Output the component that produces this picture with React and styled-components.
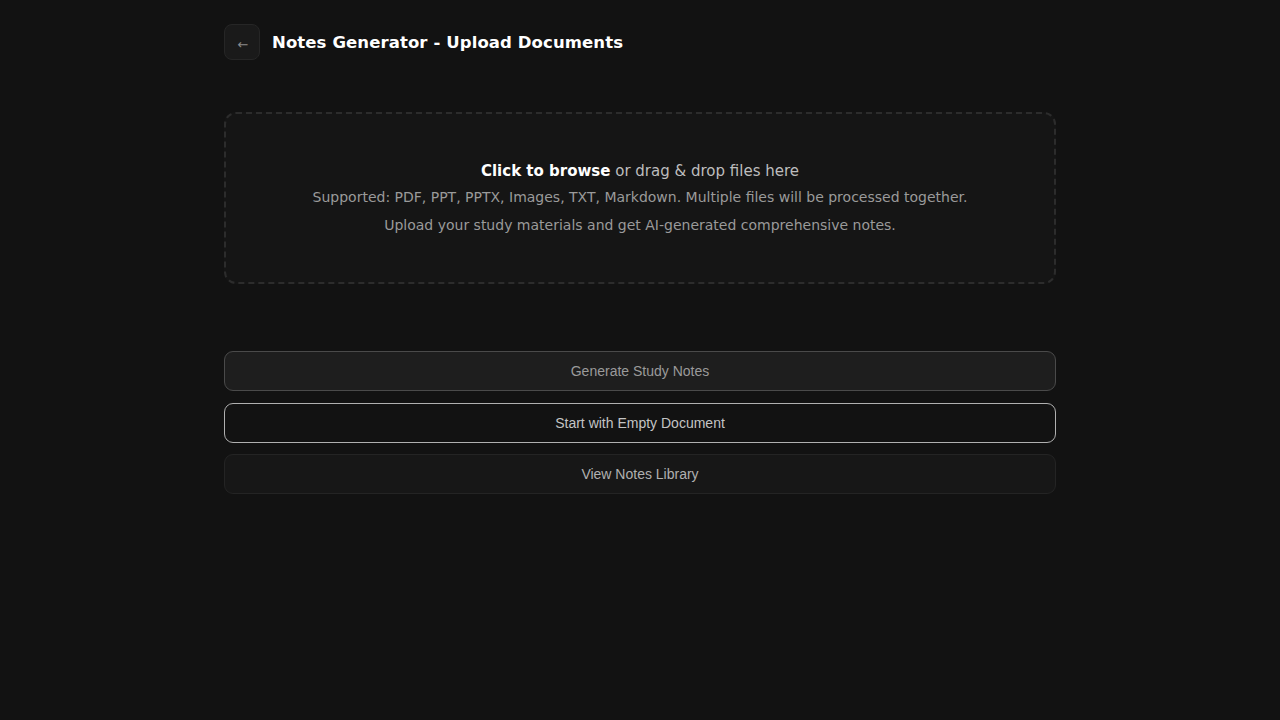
import styled, { createGlobalStyle } from "styled-components";

const GlobalStyle = createGlobalStyle`
  html, body {
    margin: 0;
    padding: 0;
    background: #121212;
  }
  body {
    font-family: "DejaVu Sans", sans-serif;
    color: #fff;
  }
`;

const Page = styled.main`
  width: 832px;
  margin: 0 auto;
  padding-top: 24px;
`;

const Header = styled.header`
  display: flex;
  align-items: center;
  gap: 12px;
  height: 36px;
`;

const BackButton = styled.button`
  width: 36px;
  height: 36px;
  display: flex;
  align-items: center;
  justify-content: center;
  padding: 5px 0 0 2px;
  background: #1a1a1a;
  border: 1px solid #262626;
  border-radius: 8px;
  color: #8a8a8a;
  font-family: "DejaVu Sans", sans-serif;
  font-size: 13px;
  cursor: pointer;
`;

const Title = styled.h1`
  margin: 0;
  padding-top: 1px;
  font-size: 16.5px;
  font-weight: 700;
  color: #fff;
  letter-spacing: 0.1px;
`;

const DropZone = styled.div`
  margin-top: 52px;
  height: 172px;
  box-sizing: border-box;
  border: 2px dashed #2c2c2c;
  border-radius: 12px;
  background: #151515;
  display: flex;
  flex-direction: column;
  align-items: center;
  justify-content: center;
  text-align: center;
  cursor: pointer;
`;

const DropTitle = styled.p`
  margin: 0 0 1px;
  padding-top: 3px;
  font-size: 15px;
  color: #bdbdbd;
  line-height: 22px;
  strong {
    color: #fff;
    font-weight: 700;
  }
`;

const DropHint = styled.p`
  margin: 0;
  font-size: 14px;
  line-height: 28px;
  color: #9a9a9a;
`;

const Actions = styled.div`
  margin-top: 67px;
  display: flex;
  flex-direction: column;
  gap: 11.5px;
`;

const variants = {
  disabled: { bg: "#1e1e1e", border: "#4a4a4a", color: "#9a9a9a" },
  outline: { bg: "#121212", border: "#b0b0b0", color: "#c4c4c4" },
  ghost: { bg: "#171717", border: "#242424", color: "#b0b0b0" },
};

const ActionButton = styled.button`
  height: 40px;
  width: 100%;
  border-radius: 9px;
  background: ${(p) => variants[p.$variant].bg};
  border: 1px solid ${(p) => variants[p.$variant].border};
  color: ${(p) => variants[p.$variant].color};
  font-family: "Liberation Sans", Arial, sans-serif;
  font-size: 14px;
  cursor: ${(p) => (p.$variant === "disabled" ? "not-allowed" : "pointer")};
`;

export default function App() {
  return (
    <>
      <GlobalStyle />
      <Page>
        <Header>
          <BackButton aria-label="Back">←</BackButton>
          <Title>Notes Generator - Upload Documents</Title>
        </Header>

        <DropZone>
          <DropTitle>
            <strong>Click to browse</strong> or drag &amp; drop files here
          </DropTitle>
          <DropHint>
            Supported: PDF, PPT, PPTX, Images, TXT, Markdown. Multiple files will be processed together.
          </DropHint>
          <DropHint>Upload your study materials and get AI-generated comprehensive notes.</DropHint>
        </DropZone>

        <Actions>
          <ActionButton $variant="disabled" disabled>
            Generate Study Notes
          </ActionButton>
          <ActionButton $variant="outline">Start with Empty Document</ActionButton>
          <ActionButton $variant="ghost">View Notes Library</ActionButton>
        </Actions>
      </Page>
    </>
  );
}
